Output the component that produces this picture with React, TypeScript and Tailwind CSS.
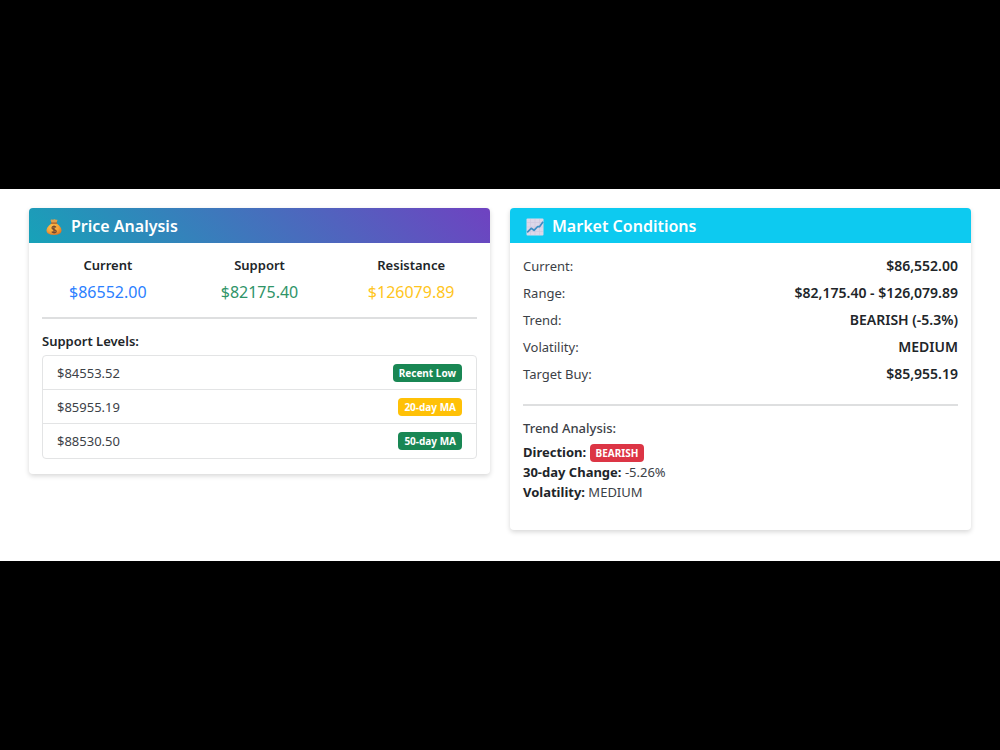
import type { ReactNode } from "react"
import clsx from "clsx"

const PRICES = [
  { label: "Current", value: "$86552.00", color: "text-[#2b7fff]" },
  { label: "Support", value: "$82175.40", color: "text-[#2f9468]" },
  { label: "Resistance", value: "$126079.89", color: "text-[#ffc520]" },
]

const SUPPORT_LEVELS = [
  { price: "$84553.52", tag: "Recent Low", color: "bg-[#198754]" },
  { price: "$85955.19", tag: "20-day MA", color: "bg-[#ffc107]" },
  { price: "$88530.50", tag: "50-day MA", color: "bg-[#198754]" },
]

const CONDITIONS = [
  { label: "Current:", value: "$86,552.00" },
  { label: "Range:", value: "$82,175.40 - $126,079.89" },
  { label: "Trend:", value: "BEARISH (-5.3%)" },
  { label: "Volatility:", value: "MEDIUM" },
  { label: "Target Buy:", value: "$85,955.19" },
]

function MoneyBagIcon() {
  return (
    <svg viewBox="0 0 18 18" className="size-[18px] shrink-0" aria-hidden>
      <defs>
        <radialGradient id="bag" cx="0.4" cy="0.35" r="0.7">
          <stop offset="0" stopColor="#ffc54d" />
          <stop offset="0.6" stopColor="#f5a238" />
          <stop offset="1" stopColor="#dc7428" />
        </radialGradient>
      </defs>
      <path d="M6.6 5.2 5.6 2c1-.9 1.8.1 2.6-.3.9-.5 1.6-.5 2.4 0 .6.4 1.2-.2 1.9.3l-1.1 3.2Z" fill="#dfa04c" />
      <path d="M7 5h4.200c2.300 1.600 5.300 4.400 5.300 7.600 0 3-3.200 4.400-7.500 4.400s-7.500-1.400-7.500-4.400C1.500 9.400 4.700 6.600 7 5Z" fill="url(#bag)" />
      <path d="M6.400 5.100h5.200" stroke="#a95f2c" strokeWidth="1.200" strokeLinecap="round" />
      <path
        d="M11 9.300c-.5-.7-1.200-.9-2-.9-1.200 0-2 .6-2 1.500 0 2.200 4.200 1.100 4.200 3.300 0 .9-.9 1.500-2.200 1.500-.9 0-1.700-.3-2.200-1M9 7.500v8"
        fill="none"
        stroke="#744832"
        strokeWidth="1.300"
      />
    </svg>
  )
}

function ChartIcon() {
  return (
    <svg viewBox="0 0 18 18" className="size-[18px] shrink-0" aria-hidden>
      <rect x="0.500" y="0.500" width="17" height="17" rx="1" fill="#dcd7e9" />
      <path d="M4.500 1v16M9 1v16M13.500 1v16M1 4.500h16M1 9h16M1 13.500h16" stroke="#cfc9df" strokeWidth="0.700" />
      <path
        d="m1.200 14.300 4-4 2.800 2 3.700-3.800 1.800.2 3.600-4.900"
        fill="none"
        stroke="#3d8fc6"
        strokeWidth="1.700"
        strokeLinejoin="round"
      />
    </svg>
  )
}

function Badge({ color, children }: { color: string; children: ReactNode }) {
  return (
    <span className={clsx("inline-block rounded px-1.5 text-[10px] leading-[18px] font-bold text-white", color)}>
      {children}
    </span>
  )
}

type CardProps = {
  title: string
  icon: ReactNode
  headerClass: string
  bodyClass: string
  children: ReactNode
}

function Card({ title, icon, headerClass, bodyClass, children }: CardProps) {
  return (
    <section className="min-w-0 flex-1 rounded bg-white shadow-[0_2px_5px_rgba(0,0,0,0.16)]">
      <header className={clsx("flex items-center gap-2 rounded-t px-4 pt-[7px] pb-[5px] text-white", headerClass)}>
        {icon}
        <h2 className="text-base leading-[23px] font-semibold">{title}</h2>
      </header>
      <div className={bodyClass}>{children}</div>
    </section>
  )
}

export default function App() {
  return (
    <div className="flex min-h-screen flex-col justify-center bg-black font-['Noto_Sans','Open_Sans',sans-serif] text-[13px] leading-5 text-[#3c4147]">
      <main className="flex flex-col items-start gap-5 bg-white px-[29px] pt-[19px] pb-[31px] sm:flex-row">
        <Card
          title="Price Analysis"
          icon={<MoneyBagIcon />}
          headerClass="bg-[linear-gradient(45deg,#17a2b8,#6f42c1)]"
          bodyClass="px-[13px] pt-3 pb-[15px]"
        >
          <dl className="-mx-2.5 grid grid-cols-3 text-center">
            {PRICES.map((item) => (
              <div key={item.label}>
                <dt className="font-semibold text-[#212529]">{item.label}</dt>
                <dd className={clsx("mt-[5px] text-base leading-6", item.color)}>{item.value}</dd>
              </div>
            ))}
          </dl>
          <hr className="mt-[13px] mb-3 border-t-2 border-[#dedfe0]" />
          <h3 className="font-semibold text-[#212529]">Support Levels:</h3>
          <ul className="mt-1 divide-y divide-[#e3e4e5] rounded border border-[#e3e4e5]">
            {SUPPORT_LEVELS.map((level) => (
              <li key={level.tag} className="flex h-[34px] items-center justify-between px-3.5">
                {level.price}
                <Badge color={level.color}>{level.tag}</Badge>
              </li>
            ))}
          </ul>
        </Card>

        <Card
          title="Market Conditions"
          icon={<ChartIcon />}
          headerClass="bg-[#0dcaf0]"
          bodyClass="px-[13px] pt-[13px] pb-7"
        >
          <dl className="flex flex-col gap-[7px]">
            {CONDITIONS.map((row) => (
              <div key={row.label} className="flex justify-between">
                <dt>{row.label}</dt>
                <dd className="text-sm leading-5 font-semibold text-[#212529]">{row.value}</dd>
              </div>
            ))}
          </dl>
          <hr className="mt-5 mb-3 border-t-2 border-[#dedfe0]" />
          <h3 className="font-medium">Trend Analysis:</h3>
          <div className="mt-1">
            <p>
              <strong className="text-[#212529]">Direction:</strong> <Badge color="bg-[#dc3545]">BEARISH</Badge>
            </p>
            <p>
              <strong className="text-[#212529]">30-day Change:</strong> -5.26%
            </p>
            <p>
              <strong className="text-[#212529]">Volatility:</strong> MEDIUM
            </p>
          </div>
        </Card>
      </main>
    </div>
  )
}
